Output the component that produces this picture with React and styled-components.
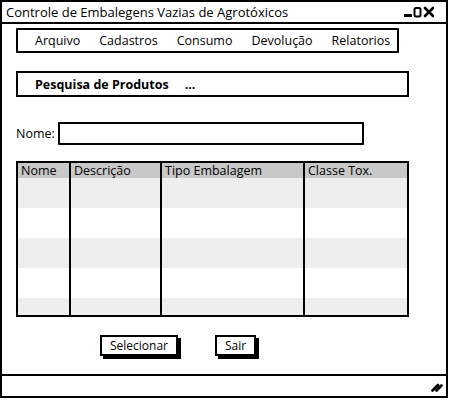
import React from "react";
import styled, { createGlobalStyle } from "styled-components";

const Global = createGlobalStyle`
  body {
    margin: 0;
    background: #fff;
    font-family: "Open Sans", "Liberation Sans", sans-serif;
    color: #000;
  }
`;

const Window = styled.div`
  width: 448px;
  height: 398px;
  box-sizing: border-box;
  border: 2px solid #000;
  display: flex;
  flex-direction: column;
`;

const TitleBar = styled.div`
  height: 20px;
  border-bottom: 2px solid #000;
  display: flex;
  align-items: center;
  justify-content: space-between;
  padding: 0 12px 0 4px;
  font-size: 13px;
`;

const Controls = styled.div`
  display: flex;
  align-items: center;
`;

const Body = styled.div`
  flex: 1;
  padding: 4px 0 0 14px;
  display: flex;
  flex-direction: column;
`;

const MenuBar = styled.div`
  width: 383px;
  height: 25px;
  box-sizing: border-box;
  border: 2px solid #000;
  border-radius: 1px;
  display: flex;
  align-items: center;
  gap: 19px;
  padding-left: 17px;
  font-size: 12.5px;
`;

const SearchBar = styled.div`
  margin-top: 18px;
  width: 393px;
  height: 26px;
  box-sizing: border-box;
  border: 2px solid #000;
  display: flex;
  align-items: center;
  gap: 16px;
  padding-left: 17px;
  font-size: 12.5px;
  font-weight: bold;
`;

const FieldRow = styled.div`
  margin-top: 25px;
  display: flex;
  align-items: center;
  gap: 3px;
  font-size: 12.5px;
`;

const TextInput = styled.div`
  width: 306px;
  height: 23px;
  box-sizing: border-box;
  border: 2px solid #000;
  border-radius: 1px;
`;

const Table = styled.div`
  margin-top: 16px;
  width: 393px;
  height: 156px;
  box-sizing: border-box;
  border: 2px solid #000;
  display: grid;
  grid-template-columns: 51px 91px 143px 1fr;
  grid-template-rows: 15px repeat(5, 30px);
  overflow: hidden;
  background: linear-gradient(
    to bottom,
    #c8c8c8 0 15px,
    #eeeeee 15px 45px,
    #fff 45px 75px,
    #eeeeee 75px 105px,
    #fff 105px 135px,
    #eeeeee 135px 165px
  );
`;

const Column = styled.div`
  grid-row: 1 / span 6;
  border-left: ${(p) => (p.first ? "none" : "2px solid #000")};
  font-size: 12.5px;
  line-height: 16px;
  padding-left: 3px;
`;

const Buttons = styled.div`
  margin-top: 18px;
  display: flex;
  gap: 37px;
  padding-left: 84px;
`;

const Button = styled.div`
  height: 21px;
  box-sizing: border-box;
  border: 2px solid #000;
  box-shadow: 3px 3px 0 #000;
  padding: 0 8px;
  display: flex;
  align-items: center;
  font-size: 12px;
`;

const StatusBar = styled.div`
  height: 20px;
  border-top: 2px solid #000;
  display: flex;
  justify-content: flex-end;
  align-items: center;
  padding-right: 3px;
`;

const WindowControls = () => (
  <Controls>
    <svg width="30" height="12" viewBox="0 0 30 12">
      <rect x="0" y="8" width="8" height="3" fill="#000" />
      <rect x="10.5" y="2" width="6" height="8.5" rx="1.5" fill="none" stroke="#000" strokeWidth="2" />
      <path d="M21 2 L29 10 M29 2 L21 10" stroke="#000" strokeWidth="2.6" strokeLinecap="round" />
    </svg>
  </Controls>
);

const Grip = () => (
  <svg width="12" height="12" viewBox="0 0 12 12">
    <path d="M1.5 10.5 L7 5 M5.5 10.5 L10.5 5.5" stroke="#000" strokeWidth="2.6" strokeLinecap="round" />
  </svg>
);

const columns = ["Nome", "Descrição", "Tipo Embalagem", "Classe Tox."];

export default function App() {
  return (
    <>
      <Global />
      <Window>
        <TitleBar>
          <span>Controle de Embalegens Vazias de Agrotóxicos</span>
          <WindowControls />
        </TitleBar>
        <Body>
          <MenuBar>
            <span>Arquivo</span>
            <span>Cadastros</span>
            <span>Consumo</span>
            <span>Devolução</span>
            <span>Relatorios</span>
          </MenuBar>
          <SearchBar>
            <span>Pesquisa de Produtos</span>
            <span>...</span>
          </SearchBar>
          <FieldRow>
            <span>Nome:</span>
            <TextInput />
          </FieldRow>
          <Table>
            {columns.map((c, i) => (
              <Column key={c} first={i === 0}>{c}</Column>
            ))}
          </Table>
          <Buttons>
            <Button>Selecionar</Button>
            <Button>Sair</Button>
          </Buttons>
        </Body>
        <StatusBar>
          <Grip />
        </StatusBar>
      </Window>
    </>
  );
}
